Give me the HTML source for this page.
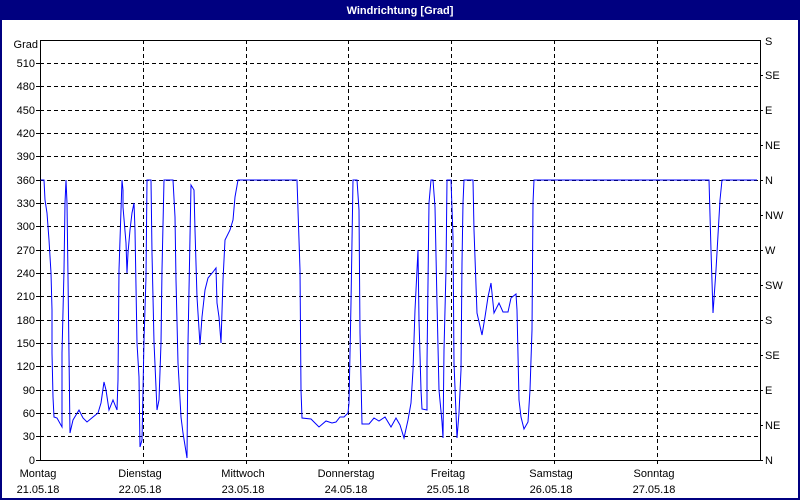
<!DOCTYPE html>
<html><head><meta charset="utf-8"><style>
html,body{margin:0;padding:0;background:#fff}
svg{display:block}
text{font-family:"Liberation Sans",sans-serif;font-size:11px;fill:#000}
</style></head><body>
<svg width="800" height="500" xmlns="http://www.w3.org/2000/svg">
<rect x="0" y="0" width="800" height="500" fill="#000080"/>
<rect x="2" y="20" width="796" height="478" fill="#fff"/>
<text x="400" y="14" text-anchor="middle" style="fill:#fff;font-weight:bold;font-size:11px">Windrichtung [Grad]</text>
<g stroke="#000" stroke-width="1" stroke-dasharray="4,3" shape-rendering="crispEdges">
<line x1="40" x2="760" y1="63.5" y2="63.5"/><line x1="40" x2="760" y1="86.5" y2="86.5"/><line x1="40" x2="760" y1="110.5" y2="110.5"/><line x1="40" x2="760" y1="133.5" y2="133.5"/><line x1="40" x2="760" y1="156.5" y2="156.5"/><line x1="40" x2="760" y1="180.5" y2="180.5"/><line x1="40" x2="760" y1="203.5" y2="203.5"/><line x1="40" x2="760" y1="226.5" y2="226.5"/><line x1="40" x2="760" y1="250.5" y2="250.5"/><line x1="40" x2="760" y1="273.5" y2="273.5"/><line x1="40" x2="760" y1="296.5" y2="296.5"/><line x1="40" x2="760" y1="320.5" y2="320.5"/><line x1="40" x2="760" y1="343.5" y2="343.5"/><line x1="40" x2="760" y1="366.5" y2="366.5"/><line x1="40" x2="760" y1="390.5" y2="390.5"/><line x1="40" x2="760" y1="413.5" y2="413.5"/><line x1="40" x2="760" y1="436.5" y2="436.5"/>
<line x1="143.5" x2="143.5" y1="40" y2="465"/><line x1="246.5" x2="246.5" y1="40" y2="465"/><line x1="348.5" x2="348.5" y1="40" y2="465"/><line x1="451.5" x2="451.5" y1="40" y2="465"/><line x1="554.5" x2="554.5" y1="40" y2="465"/><line x1="657.5" x2="657.5" y1="40" y2="465"/>
</g>
<g stroke="#000" fill="none" shape-rendering="crispEdges">
<path d="M40.5 40.5H760.5V460.5H40.5Z"/>
<path d="M36 63.5h4M36 86.5h4M36 110.5h4M36 133.5h4M36 156.5h4M36 180.5h4M36 203.5h4M36 226.5h4M36 250.5h4M36 273.5h4M36 296.5h4M36 320.5h4M36 343.5h4M36 366.5h4M36 390.5h4M36 413.5h4M36 436.5h4M36 460.5h4"/>
<path d="M760 75.5h3M760 110.5h3M760 145.5h3M760 180.5h3M760 215.5h3M760 250.5h3M760 285.5h3M760 320.5h3M760 355.5h3M760 390.5h3M760 425.5h3M760 460.5h3"/>
</g>
<g text-anchor="end">
<text x="38" y="48">Grad</text><text x="35" y="67">510</text><text x="35" y="90">480</text><text x="35" y="114">450</text><text x="35" y="137">420</text><text x="35" y="160">390</text><text x="35" y="184">360</text><text x="35" y="207">330</text><text x="35" y="230">300</text><text x="35" y="254">270</text><text x="35" y="277">240</text><text x="35" y="300">210</text><text x="35" y="324">180</text><text x="35" y="347">150</text><text x="35" y="370">120</text><text x="35" y="394">90</text><text x="35" y="417">60</text><text x="35" y="440">30</text><text x="35" y="464">0</text>
</g>
<g>
<text x="765" y="45">S</text><text x="765" y="79">SE</text><text x="765" y="114">E</text><text x="765" y="149">NE</text><text x="765" y="184">N</text><text x="765" y="219">NW</text><text x="765" y="254">W</text><text x="765" y="289">SW</text><text x="765" y="324">S</text><text x="765" y="359">SE</text><text x="765" y="394">E</text><text x="765" y="429">NE</text><text x="765" y="464">N</text>
</g>
<g text-anchor="middle">
<text x="38" y="477">Montag</text><text x="38" y="493">21.05.18</text>
<text x="140" y="477">Dienstag</text><text x="140" y="493">22.05.18</text>
<text x="243" y="477">Mittwoch</text><text x="243" y="493">23.05.18</text>
<text x="346" y="477">Donnerstag</text><text x="346" y="493">24.05.18</text>
<text x="448" y="477">Freitag</text><text x="448" y="493">25.05.18</text>
<text x="551" y="477">Samstag</text><text x="551" y="493">26.05.18</text>
<text x="654" y="477">Sonntag</text><text x="654" y="493">27.05.18</text>
</g>
<polyline fill="none" stroke="#0000ff" stroke-width="1" points="41,180 44,180 45,200 47,213 49,240 51,273 52,310 52,353 53,397 54,417 57,418 62,427 62,353 64,270 65,203 66,180 67,203 68,277 70,433 73,420 79,410 83,418 87,422 93,417 98,413 101,403 104,382 106,390 109,410 113,400 117,410 118,380 119,270 121,210 122,180 123,190 123,207 126,243 127,273 128,253 130,230 132,213 134,203 135,230 137,343 139,377 140,447 142,440 144,340 146,277 147,180 151,180 152,253 154,342 157,410 159,400 161,343 162,270 164,180 173,180 175,217 176,280 178,363 181,417 183,433 187,458 188,343 190,237 191,185 194,190 195,230 197,297 200,345 202,317 205,290 208,278 213,272 216,268 217,303 219,317 221,343 223,280 225,240 230,230 233,220 235,197 238,180 297,180 298,210 300,270 301,390 302,418 311,419 315,423 319,427 326,421 332,423 336,422 340,417 344,417 348,413 349,403 351,303 353,180 357,180 359,210 360,333 362,424 369,424 374,418 379,421 385,417 391,427 396,418 400,425 404,438 408,420 411,403 413,370 415,310 417,270 418,250 419,320 421,390 422,409 427,410 427,363 429,203 431,180 433,180 435,207 437,303 439,390 442,422 443,438 444,350 446,270 447,180 451,180 453,237 454,363 457,438 459,413 461,370 462,263 463,203 464,180 473,180 474,230 477,313 482,335 485,317 488,297 491,283 494,313 499,303 503,312 508,312 511,298 516,294 517,310 519,400 521,417 524,429 528,422 530,390 532,330 533,203 534,180 709,180 711,250 713,313 716,270 720,200 722,180 757,180"/>
</svg>
</body></html>
